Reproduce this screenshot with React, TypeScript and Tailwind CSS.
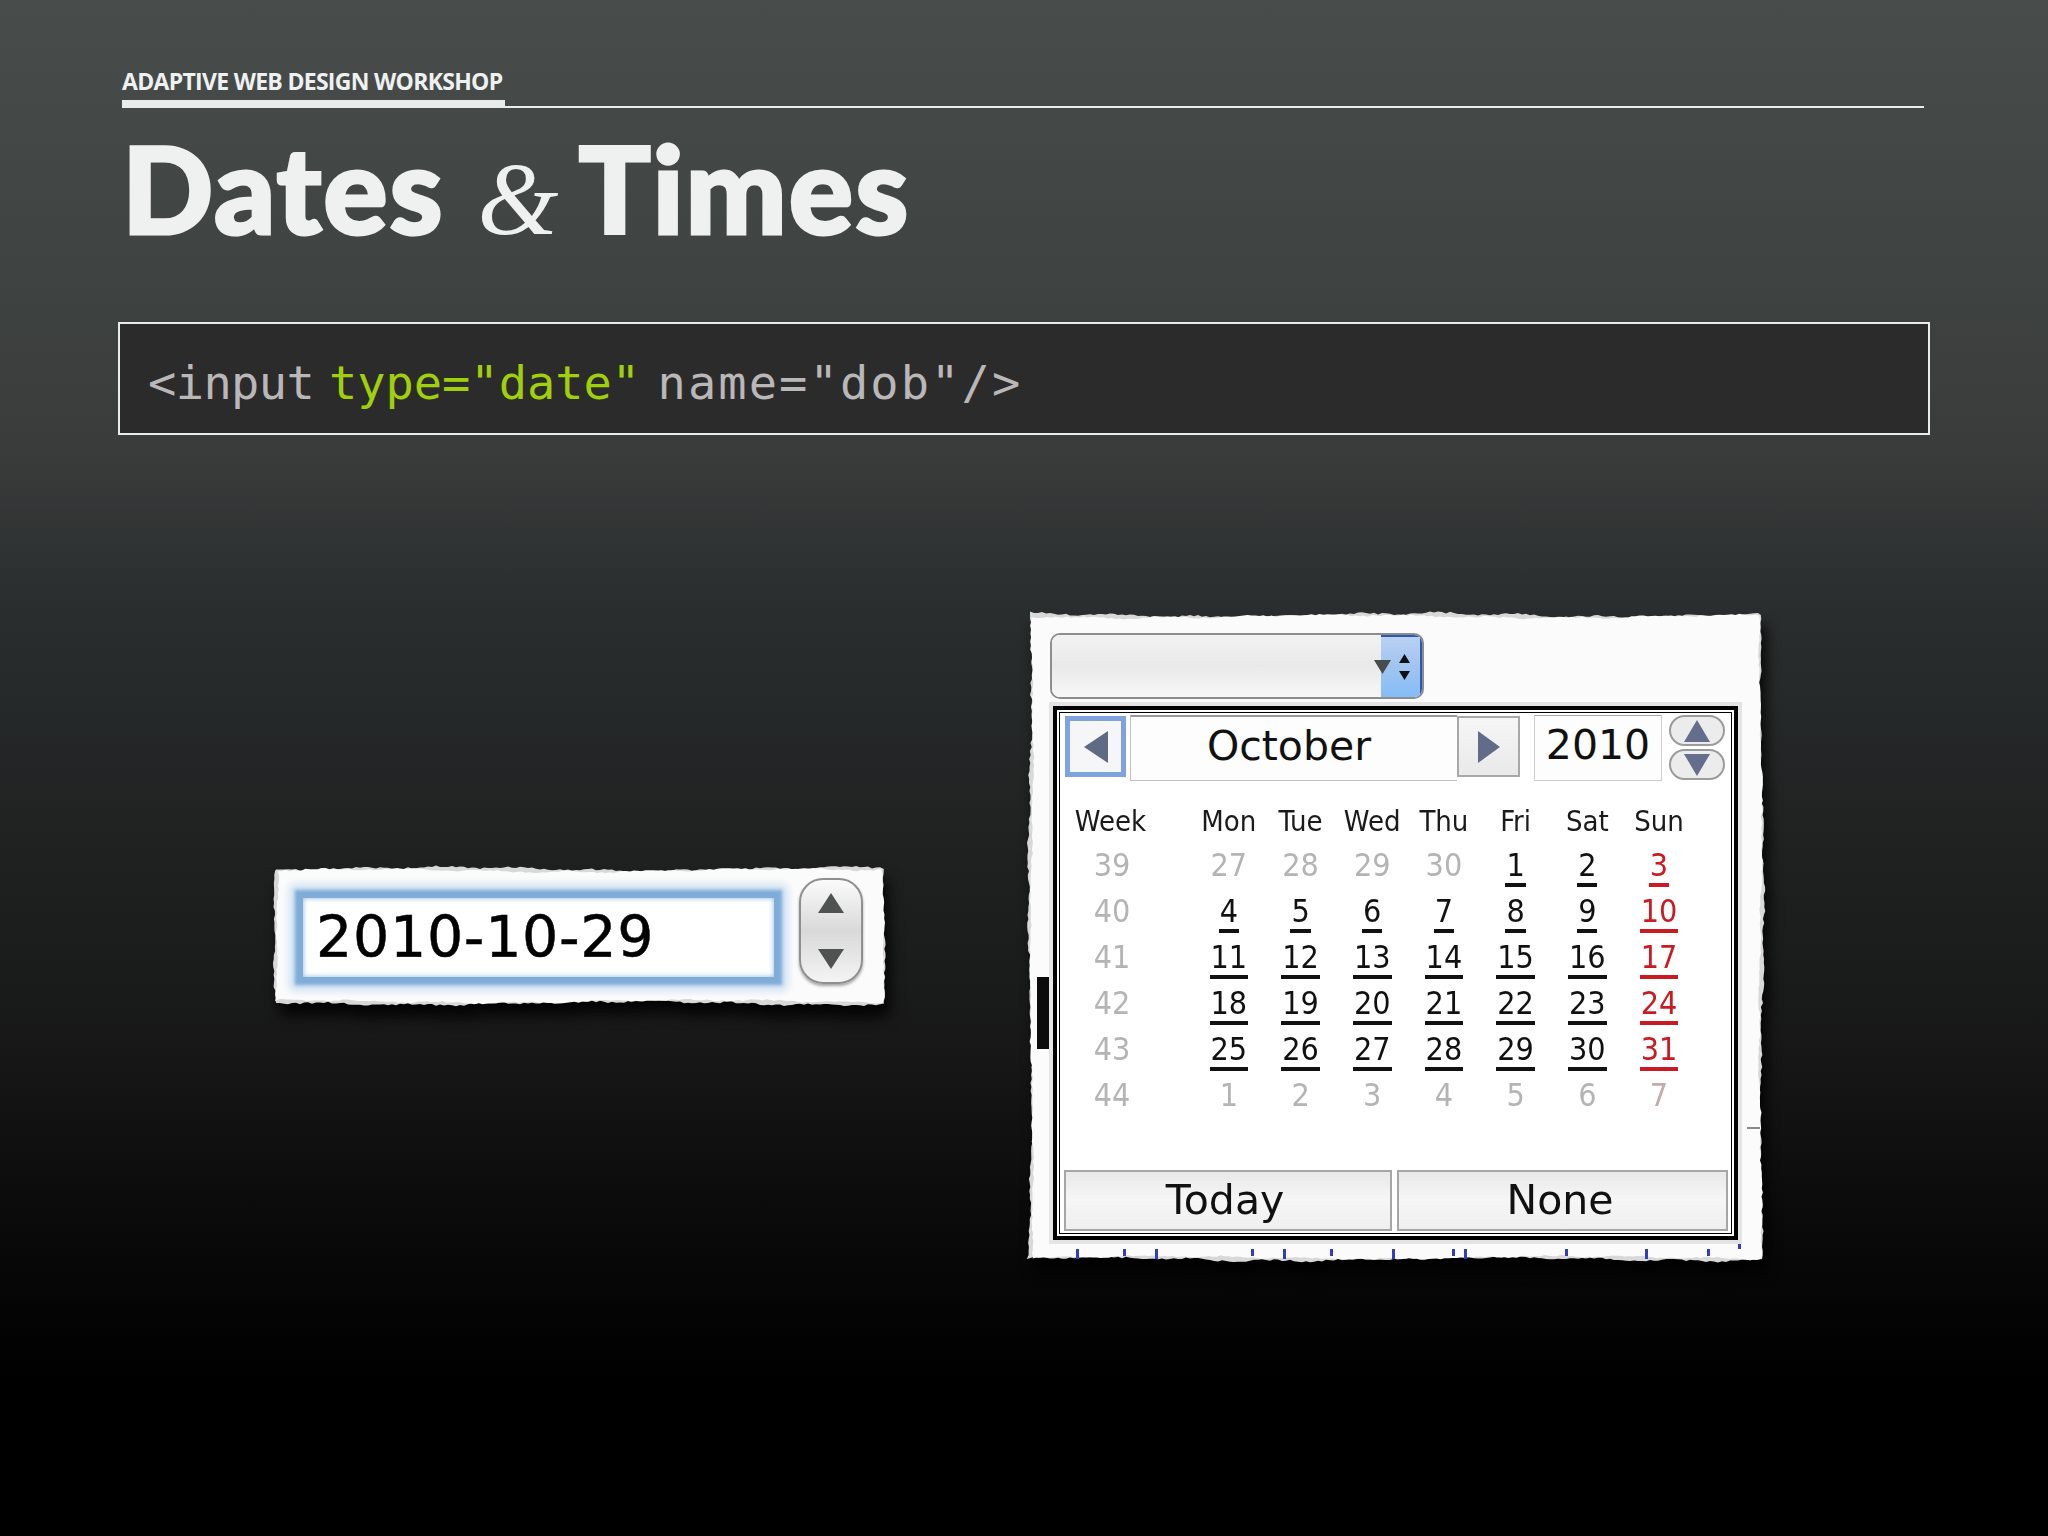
import React from "react";

const weeks = [
    { week: 39, days: [27, 28, 29, 30, 1, 2, 3], inMonthFrom: 4, inMonthTo: 6 },
    { week: 40, days: [4, 5, 6, 7, 8, 9, 10], inMonthFrom: 0, inMonthTo: 6 },
    { week: 41, days: [11, 12, 13, 14, 15, 16, 17], inMonthFrom: 0, inMonthTo: 6 },
    { week: 42, days: [18, 19, 20, 21, 22, 23, 24], inMonthFrom: 0, inMonthTo: 6 },
    { week: 43, days: [25, 26, 27, 28, 29, 30, 31], inMonthFrom: 0, inMonthTo: 6 },
    { week: 44, days: [1, 2, 3, 4, 5, 6, 7], inMonthFrom: 7, inMonthTo: 6 },
];
const dayNames = ["Mon", "Tue", "Wed", "Thu", "Fri", "Sat", "Sun"];

// rough wobble for the torn paper edge, same result on every render
const wobble = (i: number, seed: number, amp: number) => {
    const r = Math.sin(i * 12.9898 + seed * 78.233) * 43758.5453;
    const noise = r - Math.floor(r) - 0.5;
    return (Math.sin(i * 0.06 + seed) * 1.2 + Math.sin(i * 0.31 + seed * 2.1) * 0.6 + noise * 1.3) * amp;
};

function tornPoints(w: number, h: number, inset: number, seed: number, amp: number) {
    const pts: string[] = [];
    const step = 4;
    let n = 0;
    const m = 8 + inset;
    for (let x = m; x < w - m; x += step) pts.push(`${x},${m + wobble(n++, seed, amp)}`);
    for (let y = m; y < h - m; y += step) pts.push(`${w - m + wobble(n++, seed, amp)},${y}`);
    for (let x = w - m; x > m; x -= step) pts.push(`${x},${h - m + wobble(n++, seed, amp)}`);
    for (let y = h - m; y > m; y -= step) pts.push(`${m + wobble(n++, seed, amp)},${y}`);
    return pts.join(" ");
}

type TornProps = {
    w: number;
    h: number;
    seed: number;
    className?: string;
    marks?: React.ReactNode;
    children: React.ReactNode;
};
function TornPaper({ w, h, seed, className, marks, children }: TornProps) {
    return (
        <div className={`relative shrink-0 blur-[0.6px] ${className ?? ""}`}>
            <svg
                width={w}
                height={h}
                viewBox={`0 0 ${w} ${h}`}
                className="absolute left-0 top-0 overflow-visible drop-shadow-[5px_12px_7px_rgba(0,0,0,0.85)]">
                <polygon points={tornPoints(w, h, 0, seed, 1.5)} fill="#d8d8d8" />
                <polygon points={tornPoints(w, h, 1.5, seed + 1.3, 1.2)} fill="#fbfbfb" />
                {marks}
            </svg>
            <div className="relative">{children}</div>
        </div>
    );
}

function Tri({ w, h, dir, fill, className }: { w: number; h: number; dir: "up" | "down" | "left" | "right"; fill: string; className?: string }) {
    const points = {
        up: `${w / 2},0 ${w},${h} 0,${h}`,
        down: `0,0 ${w},0 ${w / 2},${h}`,
        left: `0,${h / 2} ${w},0 ${w},${h}`,
        right: `0,0 ${w},${h / 2} 0,${h}`,
    }[dir];
    return (
        <svg width={w} height={h} viewBox={`0 0 ${w} ${h}`} className={className}>
            <polygon points={points} fill={fill} />
        </svg>
    );
}

function DateField() {
    return (
        <TornPaper w={624} h={150} seed={2.2} className="ml-[150px] mt-[426px] h-[150px] w-[624px]">
            <div className="flex items-start pl-[35px] pt-[37px]">
                <div className="flex h-[79px] w-[471px] items-center bg-white pl-[13px] font-['DejaVu_Sans',sans-serif] text-[57px] tracking-[0.7px] text-black shadow-[inset_0_0_4px_1px_#a9c8e6,0_0_3px_8px_#80acd8,0_0_8px_13px_#c6dcf0] [-webkit-text-stroke:0.5px_#000]">
                    2010-10-29
                </div>
                <div className="ml-[25px] -mt-[20px] flex h-[106px] w-[64px] flex-col items-center justify-between rounded-[24px] border-2 border-[#8f8f8f] bg-gradient-to-b from-[#fbfbfb] via-[#d9d9d9] to-[#f4f4f4] py-[13px] shadow-[0_2px_3px_rgba(0,0,0,0.35)]">
                    <Tri w={26} h={20} dir="up" fill="#505252" />
                    <Tri w={26} h={20} dir="down" fill="#505252" />
                </div>
            </div>
        </TornPaper>
    );
}

function DayCell({ day, tone, underlined }: { day: number; tone: string; underlined: boolean }) {
    return (
        <div className="flex h-[46px] justify-center">
            <span
                className={`mt-[5px] block h-[39px] px-[1px] text-center leading-[35px] ${tone} ${underlined ? "border-b-4 border-current" : ""}`}>
                {day}
            </span>
        </div>
    );
}

function Calendar() {
    return (
        <div className="flex h-[534px] w-[685px] flex-col border-4 border-black bg-white shadow-[0_0_0_4px_#e4e4e4] outline outline-1 -outline-offset-[7px] outline-black">
            <div className="ml-[8px] mt-[5px] flex items-start text-[41px] text-[#111]">
                <div className="mt-[1px] flex h-[61px] w-[61px] items-center justify-center border-[5px] border-[#7fa3dc] bg-[#f6f6f8]">
                    <Tri w={24} h={32} dir="left" fill="#5f6a85" />
                </div>
                <div className="ml-[4px] flex h-[66px] w-[327px] items-center justify-center border-t-2 border-b border-l border-[#c2c2c2] border-t-[#9a9a9a] bg-[#fdfdfd] pb-[4px] pr-[10px]">
                    October
                </div>
                <div className="mt-[1px] flex h-[61px] w-[63px] items-center justify-center border-2 border-[#a8a8a8] bg-gradient-to-b from-[#f6f6f6] to-[#e9e9e9]">
                    <Tri w={22} h={32} dir="right" fill="#626c88" />
                </div>
                <div className="ml-[14px] flex h-[66px] w-[128px] items-center justify-center border border-[#cfcfcf] border-t-[#a8a8a8] bg-[#fdfdfd] pb-[4px]">
                    2010
                </div>
                <div className="ml-[7px] flex w-[56px] flex-col gap-[3px]">
                    <div className="flex h-[31px] items-center justify-center rounded-[16px] border-2 border-[#9b9b9b] bg-[#ececec]">
                        <Tri w={26} h={22} dir="up" fill="#646e8c" />
                    </div>
                    <div className="flex h-[31px] items-center justify-center rounded-[16px] border-2 border-[#9b9b9b] bg-[#ececec]">
                        <Tri w={26} h={22} dir="down" fill="#646e8c" />
                    </div>
                </div>
            </div>

            <div className="mt-[20px] grid grid-cols-[136px_repeat(7,71.7px)] font-stretch-condensed text-[29px] text-[#1a1a1a]">
                <div className="h-[42px] pr-[29px] text-center leading-[40px]">Week</div>
                {dayNames.map(name => (
                    <div key={name} className="h-[42px] text-center leading-[40px]">
                        {name}
                    </div>
                ))}
                {weeks.map(row => (
                    <React.Fragment key={row.week}>
                        <div className="h-[46px] pr-[26px] pt-[5px] text-center text-[32px] leading-[35px] text-[#b4b4b4]">{row.week}</div>
                        {row.days.map((day, i) => {
                            const inMonth = i >= row.inMonthFrom && i <= row.inMonthTo;
                            const tone = inMonth ? (i === 6 ? "text-[#cc1a22]" : "text-[#111]") : i === 6 && row.week === 44 ? "text-[#c2acac]" : "text-[#b4b4b4]";
                            return (
                                <div key={`${row.week}-${day}`} className="text-[32px]">
                                    <DayCell day={day} tone={tone} underlined={inMonth} />
                                </div>
                            );
                        })}
                    </React.Fragment>
                ))}
            </div>

            <div className="mb-[5px] ml-[7px] mt-auto flex gap-[5px] text-[41px] text-[#111]">
                <div className="flex h-[61px] w-[328px] items-center justify-center border-2 border-[#a6a6a6] bg-gradient-to-b from-[#e9e9e9] via-[#f6f6f6] to-[#efefef] pr-[6px]">
                    Today
                </div>
                <div className="flex h-[61px] w-[331px] items-center justify-center border-2 border-[#a6a6a6] bg-gradient-to-b from-[#e9e9e9] via-[#f6f6f6] to-[#efefef] pr-[5px]">
                    None
                </div>
            </div>
        </div>
    );
}

function DatePopup() {
    // scraps of the page behind the popup, visible round its edges
    const marks = (
        <g>
            <rect x="15" y="370" width="12" height="72" fill="#0c0c0c" />
            <rect x="725" y="520" width="13" height="2" fill="#8a8a8a" />
            {[54, 101, 133, 229, 261, 308, 370, 430, 442, 543, 623, 685].map((x, i) => (
                <rect key={x} x={x} y={642} width="3" height={i % 2 ? 7 : 10} fill="#2f3cc4" />
            ))}
            <rect x="716" y="634" width="3" height="8" fill="#2f3cc4" />
        </g>
    );
    return (
        <TornPaper w={748} h={660} seed={5.1} marks={marks} className="ml-[130px] mt-[172px] h-[660px] w-[748px]">
            <div className="pl-[28px] pt-[26px]">
                <div className="relative flex h-[66px] w-[374px] overflow-hidden rounded-[10px] border-2 border-[#8d8d8d]">
                    <div className="flex-1 bg-gradient-to-b from-[#f2f2f2] via-[#e9e9e9] to-[#f7f7f7]" />
                    <div className="flex w-[41px] flex-col items-center justify-center gap-[8px] border-t-2 border-r-2 border-[#2c58b4] bg-gradient-to-b from-[#b9d1f2] via-[#a0c4f0] to-[#84bdf7] pl-[8px]">
                        <Tri w={11} h={9} dir="up" fill="#111" />
                        <Tri w={11} h={9} dir="down" fill="#111" />
                    </div>
                    <Tri w={17} h={14} dir="down" fill="#474c4e" className="absolute left-[322px] top-[25px]" />
                </div>
            </div>
            <div className="ml-[31px] mt-[7px]">
                <Calendar />
            </div>
        </TornPaper>
    );
}

export default function App() {
    return (
        <div className="h-[1536px] w-[2048px] overflow-hidden bg-[linear-gradient(to_bottom,#484d4c_0px,#393c3b_450px,#2b2e2e_600px,#1d1f1f_900px,#171717_1050px,#080808_1250px,#000_1380px)] pl-[118px] pt-[68px]">
            <div className="ml-[4px] w-[1802px] border-b-2 border-[#e9ecea]">
                <div className="-mb-[2px] h-[40px] w-[383px] border-b-[8px] border-[#e9ecea] font-['Open_Sans',sans-serif] text-[23px] font-bold leading-[26px] tracking-[-0.7px] whitespace-nowrap text-[#eff1f0]">
                    ADAPTIVE WEB DESIGN WORKSHOP
                </div>
            </div>

            <h1 className="ml-[4px] mt-[12px] flex h-[137px] items-baseline font-['Lato',sans-serif] text-[120px] font-black leading-[137px] tracking-[2px] text-[#eff0f0] [-webkit-text-stroke:3px_#eff0f0]">
                <span>Dates</span>
                <span className="ml-[33px] font-['Liberation_Serif',serif] text-[104px] font-normal italic tracking-normal [-webkit-text-stroke:0px]">&amp;</span>
                <span className="ml-[20px]">Times</span>
            </h1>

            <div className="mt-[65px] flex h-[113px] w-[1812px] items-center border-2 border-[#e9ecea] bg-[#2c2b2c] pl-[28px] pt-[10px] font-['DejaVu_Sans_Mono',monospace] text-[47px] text-[#b9b7b8] [word-spacing:-13px]">
                <span className="whitespace-pre">
                    <span className="tracking-[-0.6px]">{"<input "}</span>
                    <span className="text-[#a0cf0c]">{'type="date"'}</span>
                    <span className="tracking-[2.1px]">{' name="dob"/>'}</span>
                </span>
            </div>

            <div className="flex items-start font-['DejaVu_Sans',sans-serif]">
                <DateField />
                <DatePopup />
            </div>
        </div>
    );
}
